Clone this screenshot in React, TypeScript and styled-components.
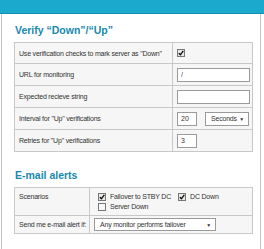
import React from "react";
import styled, { createGlobalStyle } from "styled-components";

const GlobalStyle = createGlobalStyle`
  body {
    margin: 0;
    background: #fff;
    font-family: "Liberation Sans", Arial, sans-serif;
    color: #333;
  }
`;

const Page = styled.div`
  width: 264px;
  height: 249px;
  overflow: hidden;
`;

const TopBar = styled.div`
  height: 13px;
  background: #1ba9cd;
  border-bottom: 1px solid #1590b0;
`;

const Panel = styled.div`
  margin-left: 1px;
  width: 260px;
  border: 1px solid #c4c4c4;
  border-top: none;
  padding: 9px 0 10px 12px;
  box-sizing: border-box;
`;

const Title = styled.h2`
  margin: 0 0 5px 1px;
  font-size: 10.5px;
  font-weight: bold;
  color: #1789ac;
  line-height: 14px;
  height: 14px;
`;

const Table = styled.div<{ $split: number }>`
  display: grid;
  grid-template-columns: ${(p) => p.$split}px 1fr;
  width: 237px;
  border: 1px solid #c8c8c8;
  border-bottom: none;
  background: #f6f6f6;
  margin-bottom: 16px;
`;

const Cell = styled.div<{ $h?: number; $right?: boolean }>`
  min-height: ${(p) => p.$h ?? 21}px;
  border-bottom: 1px solid #c8c8c8;
  border-right: ${(p) => (p.$right ? "none" : "1px solid #c8c8c8")};
  display: flex;
  align-items: center;
  padding: 0 3px 0 4px;
  font-size: 7px;
  letter-spacing: -0.2px;
  white-space: nowrap;
  gap: 8px;
`;

const TopCell = styled(Cell)`
  align-items: flex-start;
  padding-top: 5px;
  box-sizing: border-box;
`;

const Input = styled.input<{ $w: number }>`
  width: ${(p) => p.$w}px;
  height: 14px;
  box-sizing: border-box;
  border: 1px solid #9a9a9a;
  background: #fff;
  font-family: "Liberation Sans", Arial, sans-serif;
  font-size: 7px;
  color: #333;
  padding: 0 3px;
  margin: 0;
  outline: none;
`;

const Select = styled.div<{ $w: number; $h?: number }>`
  width: ${(p) => p.$w}px;
  height: ${(p) => p.$h ?? 14}px;
  box-sizing: border-box;
  border: 1px solid #9a9a9a;
  background: #fff;
  display: flex;
  align-items: center;
  justify-content: space-between;
  padding: 0 4px 0 5px;
  font-size: 7px;
  color: #333;
`;

const Arrow = styled.span`
  font-size: 5px;
`;

const Box = styled.span<{ $on?: boolean }>`
  width: 8px;
  height: 8px;
  box-sizing: border-box;
  border: 1px solid #777;
  background: ${(p) => (p.$on ? "#e8e8e8" : "#f8f8f8")};
  display: inline-flex;
  align-items: center;
  justify-content: center;
  flex: none;
`;

const Check = ({ on }: { on?: boolean }) => (
  <Box $on={on}>
    {on && (
      <svg width="6" height="6" viewBox="0 0 6 6">
        <path d="M0.8 3.2 L2.4 4.8 L5.3 0.9" stroke="#111" strokeWidth="1.4" fill="none" />
      </svg>
    )}
  </Box>
);

const Option = styled.label`
  display: inline-flex;
  align-items: center;
  gap: 4px;
`;

const Options = styled.div`
  display: grid;
  grid-template-columns: auto auto;
  justify-content: start;
  column-gap: 7px;
  row-gap: 2px;
  padding-left: 4px;
`;

export default function App() {
  return (
    <Page>
      <GlobalStyle />
      <TopBar />
      <Panel>
        <Title>Verify “Down”/“Up”</Title>
        <Table $split={158}>
          <Cell $h={20}>Use verification checks to mark server as "Down"</Cell>
          <Cell $h={20} $right>
            <Check on />
          </Cell>
          <Cell>URL for monitoring</Cell>
          <Cell $right>
            <Input $w={73} defaultValue="/" />
          </Cell>
          <Cell>Expected recieve string</Cell>
          <Cell $right>
            <Input $w={73} defaultValue="" />
          </Cell>
          <Cell>Interval for "Up" verifications</Cell>
          <Cell $right>
            <Input $w={20} defaultValue="20" />
            <Select $w={44}>
              Seconds <Arrow>▼</Arrow>
            </Select>
          </Cell>
          <Cell>Retries for "Up" verifications</Cell>
          <Cell $right>
            <Input $w={20} defaultValue="3" />
          </Cell>
        </Table>

        <Title>E-mail alerts</Title>
        <Table $split={75}>
          <TopCell $h={27}>Scenarios</TopCell>
          <Cell $h={27} $right>
            <Options>
              <Option>
                <Check on /> Failover to STBY DC
              </Option>
              <Option>
                <Check on /> DC Down
              </Option>
              <Option>
                <Check /> Server Down
              </Option>
            </Options>
          </Cell>
          <Cell $h={17}>Send me e-mail alert if:</Cell>
          <Cell $h={17} $right>
            <Select $w={122} $h={13}>
              Any monitor performs failover <Arrow>▼</Arrow>
            </Select>
          </Cell>
        </Table>
      </Panel>
    </Page>
  );
}
